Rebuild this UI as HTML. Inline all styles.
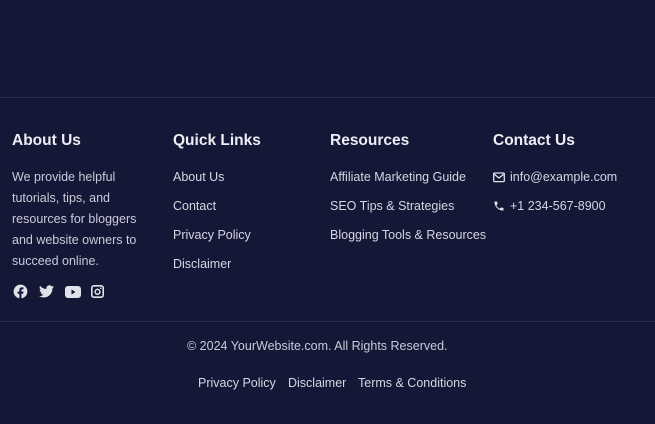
<!DOCTYPE html>
<html><head><style>
html,body{margin:0;width:655px;height:424px;background:#151736;overflow:hidden;font-family:"Liberation Sans",sans-serif;color:#d9dbe6}
.line{position:absolute;left:0;width:655px;height:1px;background:#2c2f55}
h3{position:absolute;margin:0;font-size:15.5px;font-weight:bold;color:#eceef5;top:132px}
.t{position:absolute;font-size:12.5px;white-space:nowrap;color:#d4d6e2}
</style></head><body>
<div class="line" style="top:97px"></div>
<h3 style="left:12px">About Us</h3>
<h3 style="left:173px">Quick Links</h3>
<h3 style="left:330px">Resources</h3>
<h3 style="left:493px">Contact Us</h3>
<div class="t" style="left:12px;top:167px;line-height:21px;color:#c9cbd9">We provide helpful<br>tutorials, tips, and<br>resources for bloggers<br>and website owners to<br>succeed online.</div>
<div class="t" style="left:173px;top:170px">About Us</div>
<div class="t" style="left:173px;top:199px">Contact</div>
<div class="t" style="left:173px;top:228px">Privacy Policy</div>
<div class="t" style="left:173px;top:257px">Disclaimer</div>
<div class="t" style="left:330px;top:170px">Affiliate Marketing Guide</div>
<div class="t" style="left:330px;top:199px">SEO Tips &amp; Strategies</div>
<div class="t" style="left:330px;top:228px">Blogging Tools &amp; Resources</div>
<svg style="position:absolute;left:493px;top:172px" width="12" height="11" viewBox="0 0 12 11"><rect x="0.7" y="1" width="10.6" height="8.6" rx="1" fill="none" stroke="#e0e2ea" stroke-width="1.3"/><path d="M1 2l5 4 5-4" fill="none" stroke="#e0e2ea" stroke-width="1.3"/></svg>
<div class="t" style="left:510px;top:170px">info@example.com</div>
<svg style="position:absolute;left:493px;top:200px" width="12" height="12" viewBox="0 0 24 24"><path fill="#e0e2ea" d="M6.6 10.8c1.4 2.8 3.8 5.1 6.6 6.6l2.2-2.2c.3-.3.7-.4 1-.2 1.1.4 2.300.6 3.6.6.6 0 1 .4 1 1V20c0 .6-.4 1-1 1C10.6 21 3 13.4 3 4c0-.6.4-1 1-1h3.5c.6 0 1 .4 1 1 0 1.3.2 2.5.6 3.6.1.3 0 .7-.2 1z"/></svg>
<div class="t" style="left:510px;top:199px">+1 234-567-8900</div>
<svg style="position:absolute;left:13px;top:284px" width="15" height="15" viewBox="0 0 24 24"><circle cx="12" cy="12" r="11" fill="#e0e2ea"/><path d="M13.5 24v-8.5h2.8l.4-3.3h-3.2V10c0-.9.3-1.6 1.6-1.6h1.7V5.5c-.3 0-1.3-.1-2.5-.1-2.5 0-4.1 1.5-4.1 4.2v2.6H7.4v3.3h2.8V24z" fill="#151736"/></svg>
<svg style="position:absolute;left:39px;top:285px" width="15" height="13" viewBox="0 0 24 20"><path fill="#e0e2ea" d="M24 2.4c-.9.4-1.8.7-2.8.8 1-.6 1.8-1.6 2.2-2.7-1 .6-2 1-3.1 1.2A4.9 4.9 0 0 0 11.9 6 14 14 0 0 1 1.7.9a4.9 4.9 0 0 0 1.5 6.6c-.8 0-1.600-.3-2.2-.6 0 2.4 1.7 4.4 3.9 4.8-.7.2-1.5.2-2.2.1.6 2 2.4 3.4 4.6 3.4A9.9 9.9 0 0 1 0 17.3 14 14 0 0 0 7.5 19.5c9.1 0 14-7.5 14-14v-.6c1-.7 1.8-1.6 2.5-2.5z"/></svg>
<svg style="position:absolute;left:65px;top:286px" width="16" height="12" viewBox="0 0 16 12"><rect width="16" height="12" rx="3" fill="#e0e2ea"/><path d="M6.5 3.5v5l4-2.5z" fill="#151736"/></svg>
<svg style="position:absolute;left:91px;top:285px" width="13" height="13" viewBox="0 0 13 13"><rect x="0.8" y="0.8" width="11.4" height="11.4" rx="2" fill="none" stroke="#e0e2ea" stroke-width="1.6"/><circle cx="6.5" cy="6.8" r="2.4" fill="none" stroke="#e0e2ea" stroke-width="1.5"/><circle cx="9.8" cy="3.2" r="0.8" fill="#e0e2ea"/></svg>
<div class="line" style="top:321px"></div>
<div class="t" style="left:187px;top:339px;color:#c9cbd9">© 2024 YourWebsite.com. All Rights Reserved.</div>
<div class="t" style="left:198px;top:376px">Privacy Policy</div>
<div class="t" style="left:288px;top:376px">Disclaimer</div>
<div class="t" style="left:358px;top:376px">Terms &amp; Conditions</div>
</body></html>
